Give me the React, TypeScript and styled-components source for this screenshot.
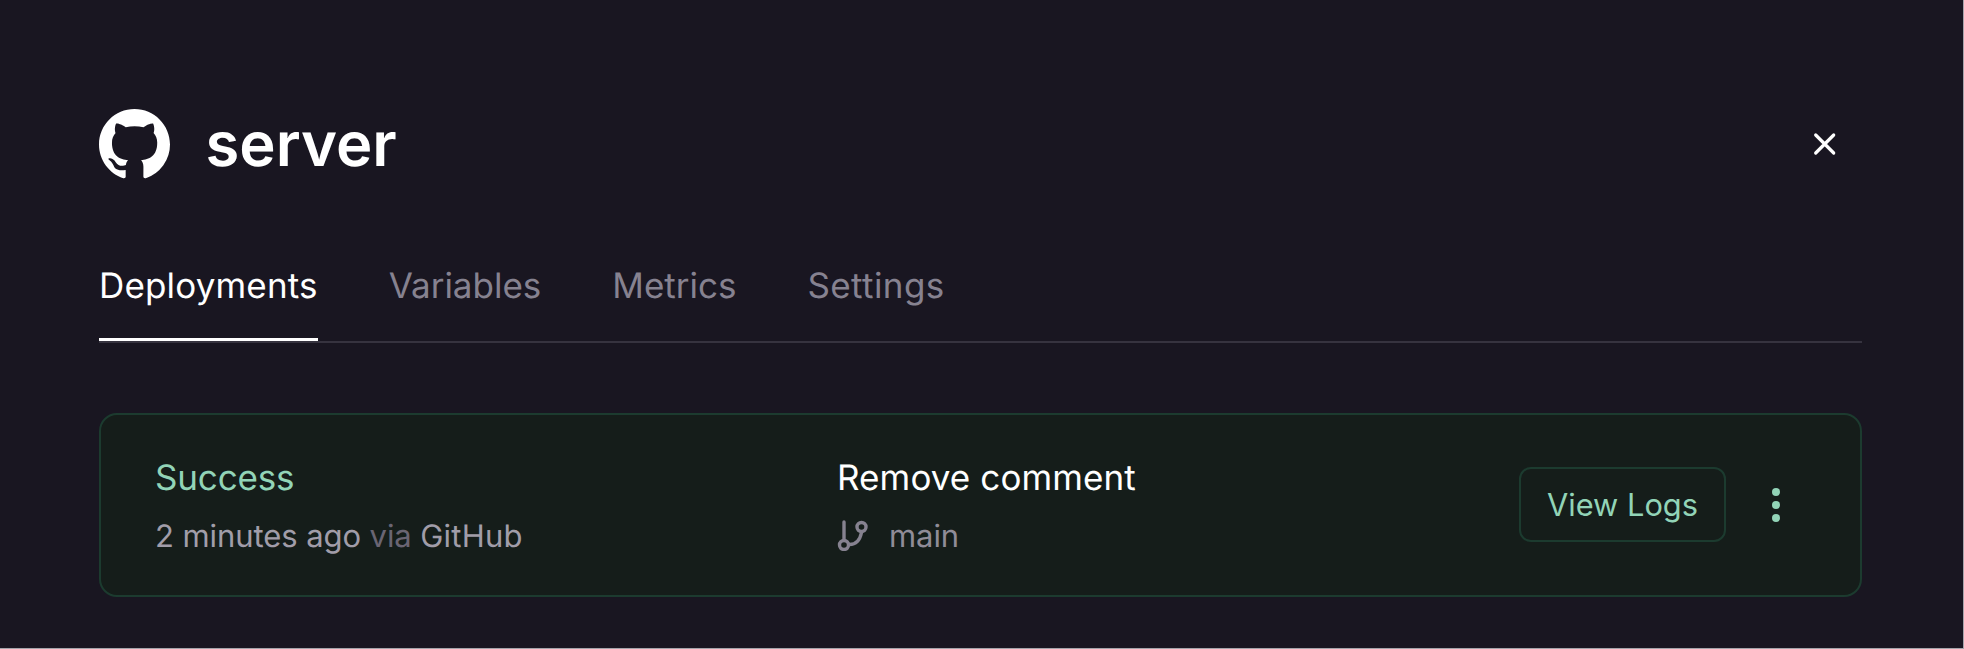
import React from "react";
import styled, { createGlobalStyle } from "styled-components";

const Global = createGlobalStyle`
  *, *::before, *::after { box-sizing: border-box; }
  body {
    margin: 0;
    background: #191621;
    color: #fff;
    font-family: Inter, "Liberation Sans", sans-serif;
    font-size: 35px;
    -webkit-font-smoothing: antialiased;
    text-rendering: geometricPrecision;
  }
`;

const Panel = styled.main`
  height: 649px;
  padding: 99px 101px 0 99px;
  border-right: 1px solid #a5a4ab;
  border-bottom: 1px solid #a5a4ab;
  overflow: hidden;
`;

const Header = styled.header`
  display: flex;
  align-items: center;
  height: 90px;
`;

const Logo = styled.svg`
  display: block;
  width: 71px;
  height: 71px;
`;

const Title = styled.h1`
  flex: 1;
  margin: 0 0 0 35.5px;
  padding-bottom: 1px;
  font-size: 61.5px;
  font-weight: 600;
  line-height: 89px;
`;

const IconButton = styled.button`
  display: flex;
  padding: 0;
  border: 0;
  background: none;
  color: inherit;
`;

const CloseButton = styled(IconButton)`
  margin-right: 25px;
`;

const Tabs = styled.nav`
  display: flex;
  gap: 71px;
  height: 107px;
  margin-top: 47px;
  border-bottom: 2px solid #36333f;
`;

const Tab = styled.a<{ $active?: boolean; $tracking: number }>`
  height: 105px;
  padding-top: 28px;
  line-height: 44px;
  letter-spacing: ${(p) => p.$tracking}px;
  color: ${(p) => (p.$active ? "#fff" : "#868290")};
  border-bottom: ${(p) => (p.$active ? "3px solid #fff" : "0")};
`;

const Card = styled.article`
  display: flex;
  align-items: center;
  height: 184px;
  margin-top: 70px;
  padding: 0 79px 0 54px;
  border: 2px solid #1c3b2f;
  border-radius: 18px;
  background: #151d1a;
`;

const Column = styled.section`
  width: 682px;
  padding-top: 2px;
`;

const Line = styled.p<{ $color: string; $tracking: number }>`
  margin: 3px 0 0;
  line-height: 54px;
  letter-spacing: ${(p) => p.$tracking}px;
  color: ${(p) => p.$color};
`;

const Meta = styled.p`
  display: flex;
  align-items: center;
  margin: 5px 0 0;
  font-size: 31px;
  line-height: 54px;
  letter-spacing: -0.08px;
  color: #a19da9;
  white-space: pre;
`;

const Via = styled.span`
  color: #6a6573;
`;

const Source = styled.span`
  margin-left: 8.5px;
  letter-spacing: 0.25px;
`;

const BranchIcon = styled.svg`
  width: 31px;
  height: 31px;
  margin-bottom: 4px;
`;

const Branch = styled.span`
  margin-left: 21px;
  color: #908c98;
`;

const Actions = styled.div`
  display: flex;
  align-items: center;
  margin-left: auto;
  color: #92d4b7;
`;

const LogsButton = styled.button`
  width: 207px;
  height: 75px;
  margin-bottom: 1px;
  padding: 0;
  border: 2px solid #1c3b2f;
  border-radius: 12px;
  background: none;
  color: inherit;
  font-family: inherit;
  font-size: 30.8px;
`;

const MenuButton = styled(IconButton)`
  margin-left: 45px;
`;

const tabs = [
  { name: "Deployments", tracking: 0.16 },
  { name: "Variables", tracking: 0 },
  { name: "Metrics", tracking: 0 },
  { name: "Settings", tracking: 0.4 },
];

export default function App() {
  return (
    <>
      <Global />
      <Panel>
        <Header>
          <Logo viewBox="0 0 16 16" fill="currentColor" aria-hidden="true">
            <path d="M8 0C3.58 0 0 3.58 0 8c0 3.54 2.29 6.53 5.47 7.59.4.07.55-.17.55-.38 0-.19-.01-.82-.01-1.49-2.01.37-2.53-.49-2.69-.94-.09-.23-.48-.94-.82-1.13-.28-.15-.68-.52-.01-.53.63-.01 1.08.58 1.23.82.72 1.21 1.87.87 2.33.66.07-.52.28-.87.51-1.07-1.78-.2-3.64-.89-3.64-3.95 0-.87.31-1.59.82-2.15-.08-.2-.36-1.02.08-2.12 0 0 .67-.21 2.2.82.64-.18 1.32-.27 2-.27s1.36.09 2 .27c1.53-1.04 2.2-.82 2.2-.82.44 1.1.16 1.92.08 2.12.51.56.82 1.27.82 2.15 0 3.07-1.87 3.75-3.65 3.95.29.25.54.73.54 1.48 0 1.07-.01 1.93-.01 2.2 0 .21.15.46.55.38A8.01 8.01 0 0 0 16 8c0-4.42-3.58-8-8-8z" />
          </Logo>
          <Title>server</Title>
          <CloseButton aria-label="Close">
            <svg width="24" height="24" viewBox="0 0 24 24" fill="none" stroke="currentColor" strokeWidth="3.2" strokeLinecap="round">
              <path d="M2.700 3l18 18M20.700 3L2.700 21" />
            </svg>
          </CloseButton>
        </Header>
        <Tabs>
          {tabs.map((tab, i) => (
            <Tab key={tab.name} $active={i === 0} $tracking={tab.tracking}>{tab.name}</Tab>
          ))}
        </Tabs>
        <Card>
          <Column>
            <Line $color="#92d4b7" $tracking={-0.15}>Success</Line>
            <Meta>2 minutes ago <Via>via</Via><Source>GitHub</Source></Meta>
          </Column>
          <Column>
            <Line $color="#fff" $tracking={0.1}>Remove comment</Line>
            <Meta>
              <BranchIcon viewBox="0 0 31 31" fill="none" stroke="#868290" strokeWidth="3.4" strokeLinecap="round">
                <path d="M7 2v17.500M24.500 12.500C23 20 19 24.500 12.500 24.500" />
                <circle cx="7" cy="25" r="4.500" />
                <circle cx="24.500" cy="7" r="4.500" />
              </BranchIcon>
              <Branch>main</Branch>
            </Meta>
          </Column>
          <Actions>
            <LogsButton>View Logs</LogsButton>
            <MenuButton aria-label="More options">
              <svg width="10" height="36" viewBox="0 0 10 36" fill="currentColor">
                <circle cx="5" cy="5" r="4" />
                <circle cx="5" cy="18" r="4" />
                <circle cx="5" cy="31" r="4" />
              </svg>
            </MenuButton>
          </Actions>
        </Card>
      </Panel>
    </>
  );
}
